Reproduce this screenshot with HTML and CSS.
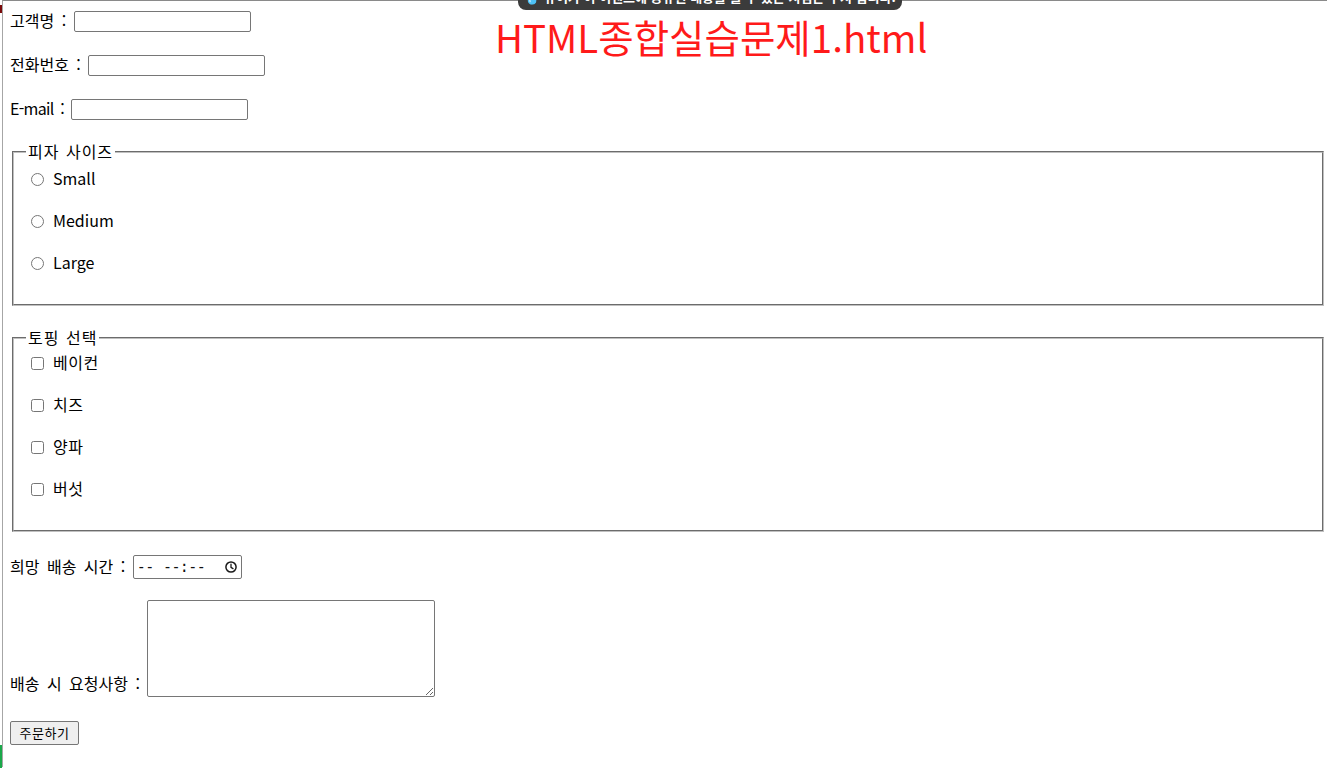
FILE: index.html
```html
<!DOCTYPE html>
<html lang="ko">
<head>
<meta charset="utf-8">
<title>HTML종합실습문제1</title>
<link rel="stylesheet" href="styles.css">
</head>
<body>
<div class="frame">
  <form class="order">
    <div class="row r1"><label class="ko">고객명 : </label><input type="text" class="txt"></div>
    <div class="row r2"><label class="ko">전화번호 : </label><input type="text" class="txt"></div>
    <div class="row r3"><label class="en">E-mail : </label><input type="text" class="txt"></div>

    <fieldset class="group g1">
      <legend class="lg">피자 사이즈</legend>
      <div class="opt"><input type="radio" name="size"><span>Small</span></div>
      <div class="opt"><input type="radio" name="size"><span>Medium</span></div>
      <div class="opt"><input type="radio" name="size"><span>Large</span></div>
    </fieldset>

    <fieldset class="group g2">
      <legend class="lg">토핑 선택</legend>
      <div class="opt"><input type="checkbox"><span class="kos">베이컨</span></div>
      <div class="opt"><input type="checkbox"><span class="kos">치즈</span></div>
      <div class="opt"><input type="checkbox"><span class="kos">양파</span></div>
      <div class="opt"><input type="checkbox"><span class="kos">버섯</span></div>
    </fieldset>

    <div class="row time">
      <label class="ko">희망 배송 시간 : </label>
      <div class="tm" role="textbox"><span class="tm-val">-- --:--</span><svg class="clock" width="12" height="12" viewBox="0 0 12 12"><circle cx="6" cy="6" r="5.1" fill="none" stroke="#1a1a1a" stroke-width="1.5"/><path d="M6 3.2V6.3L8 7.6" fill="none" stroke="#1a1a1a" stroke-width="1.3" stroke-linecap="round"/></svg></div>
    </div>
    <div class="row memo"><label class="ko">배송 시 요청사항 : </label><textarea class="ta"></textarea></div>
    <div class="row submit"><button type="button" class="btn">주문하기</button></div>
  </form>
</div>
<div class="mark mark-red"></div>
<div class="mark mark-green"></div>
<div class="toast">💧 뷰어가 이 이벤트에 공유된 내용을 볼 수 있는 시점은 수시 입니다.</div>
<div class="title">HTML종합실습문제1.html</div>
</body>
</html>
```

FILE: styles.css
```css
html, body {
  margin: 0;
  padding: 0;
  background: #fff;
}
body {
  font-family: "Noto Sans CJK KR", "Noto Sans", sans-serif;
  font-size: 16px;
  color: #000;
  width: 1327px;
  height: 768px;
  overflow: hidden;
  position: relative;
}
.frame {
  margin-left: 2px;
  border-left: 1px solid #a6a6a6;
  border-top: 1px solid #8a8a8a;
  height: 767px;
  box-sizing: border-box;
  padding: 10px 1px 0 7px;
}
.order {
  display: flex;
  flex-direction: column;
}
.ko {
  letter-spacing: 0;
  word-spacing: 3px;
}
.lg {
  letter-spacing: 1px;
  word-spacing: 1px;
}
.kos { letter-spacing: 0.5px; }
.en {
  letter-spacing: -0.7px;
  word-spacing: 3px;
}
.row {
  display: flex;
  align-items: center;
  line-height: 21px;
  white-space: pre;
}
.row label { position: relative; top: -1px; }
.r2 { margin-top: 23px; }
.r3 { margin-top: 23px; }
.txt {
  width: 177px;
  height: 21px;
  box-sizing: border-box;
  border: 1px solid #767676;
  border-radius: 2px;
  padding: 1px 2px;
  margin: 0;
  font: 13px "Liberation Sans", sans-serif;
}
.group {
  margin: 22px 2px 0 2px;
  padding: 0 12px 0 12px;
  border: 2px groove #c0c0c0;
  display: flex;
  flex-direction: column;
}
.group legend {
  padding: 0 2px;
  line-height: 20px;
  font-size: 16px;
  position: relative;
  top: -1px;
}
.g1 { margin-top: 22px; padding-bottom: 31px; }
.g2 { margin-top: 22px; padding-bottom: 31px; }
.opt {
  display: flex;
  align-items: center;
  height: 20px;
  margin-top: 22px;
  white-space: pre;
}
.g1 .opt:first-of-type { margin-top: 7px; }
.g2 .opt:first-of-type { margin-top: 5px; }
.opt input {
  margin: 0 9px 0 5px;
  width: 13px;
  height: 13px;
}
.opt span { position: relative; top: -1px; }
.time { margin-top: 23px; }
.tm {
  width: 109px;
  height: 24px;
  box-sizing: border-box;
  border: 1px solid #767676;
  border-radius: 2px;
  padding: 0 4px 0 3px;
  display: flex;
  align-items: center;
  justify-content: space-between;
  background: #fff;
}
.tm-val {
  font: 15px "DejaVu Sans Mono", monospace;
  letter-spacing: -0.6px;
  word-spacing: 1px;
  color: #111;
  line-height: 20px;
}
.clock { flex: none; }
.memo {
  margin-top: 21px;
  align-items: flex-end;
}
.memo label { line-height: 21px; top: -3px; }
.ta {
  width: 288px;
  height: 97px;
  box-sizing: border-box;
  border: 1px solid #767676;
  border-radius: 2px;
  margin: 0;
  resize: both;
}
.submit { margin-top: 24px; }
.btn {
  width: 69px;
  height: 24px;
  box-sizing: border-box;
  font: 13px "Noto Sans CJK KR", sans-serif;
  letter-spacing: 0.5px;
  border: 1px solid #767676;
  border-radius: 2px;
  background: #efefef;
  padding: 0;
  line-height: 20px;
}
.mark {
  position: absolute;
  left: 0;
  width: 2px;
}
.mark-red { top: 5px; height: 8px; background: #7a0a0a; }
.mark-green { top: 745px; height: 23px; background: #1aa84a; }
.toast {
  position: absolute;
  left: 518px;
  top: -12px;
  width: 384px;
  height: 22px;
  box-sizing: border-box;
  background: #3b3b3b;
  border-radius: 8px;
  color: #fff;
  font: bold 13px "Noto Sans CJK KR", sans-serif;
  line-height: 18px;
  text-align: center;
  white-space: nowrap;
  overflow: hidden;
}
.title {
  position: absolute;
  left: 495px;
  top: 12px;
  font: 38.5px "Noto Sans CJK KR", sans-serif;
  line-height: 48px;
  color: #ff1a1a;
  white-space: nowrap;
}
```
